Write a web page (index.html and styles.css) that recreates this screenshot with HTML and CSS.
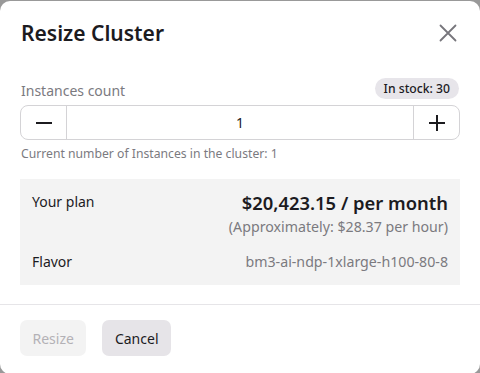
FILE: index.html
```html
<!DOCTYPE html>
<html>
<head>
<meta charset="utf-8">
<link rel="stylesheet" href="styles.css">
</head>
<body>
<div class="dialog">
  <div class="header">
    <h1 class="title">Resize Cluster</h1>
    <button class="close" aria-label="Close">
      <svg width="18" height="18" viewBox="0 0 18 18"><path d="M1.5 1.5L16.5 16.5M16.5 1.5L1.5 16.5" stroke="#77767c" stroke-width="1.8" stroke-linecap="round"/></svg>
    </button>
  </div>
  <div class="body">
    <div class="label-row">
      <span class="label">Instances count</span>
      <span class="badge">In stock: 30</span>
    </div>
    <div class="stepper">
      <button class="step"><svg width="16" height="16" viewBox="0 0 16 16"><path d="M0 8H16" stroke="#1c1b1f" stroke-width="2"/></svg></button>
      <div class="value">1</div>
      <button class="step"><svg width="16" height="16" viewBox="0 0 16 16"><path d="M0 8H16M8 0V16" stroke="#1c1b1f" stroke-width="2"/></svg></button>
    </div>
    <div class="hint">Current number of Instances in the cluster: 1</div>
    <div class="plan">
      <div class="plan-row">
        <span class="plan-key">Your plan</span>
        <div class="plan-vals">
          <span class="price">$20,423.15 / per month</span>
          <span class="approx">(Approximately: $28.37 per hour)</span>
        </div>
      </div>
      <div class="plan-row flavor">
        <span class="plan-key">Flavor</span>
        <span class="approx">bm3-ai-ndp-1xlarge-h100-80-8</span>
      </div>
    </div>
  </div>
  <div class="footer">
    <button class="btn btn-disabled">Resize</button>
    <button class="btn btn-secondary">Cancel</button>
  </div>
</div>
</body>
</html>
```

FILE: styles.css
```css
html, body {
  margin: 0;
  padding: 0;
  height: 100%;
}
body {
  background: #999999;
  font-family: "Noto Sans", "Open Sans", sans-serif;
  color: #1c1b1f;
  padding-top: 1px;
  box-sizing: border-box;
  overflow: hidden;
}
.dialog {
  background: #ffffff;
  border-radius: 10px;
  height: 373px;
  width: 480px;
  box-sizing: border-box;
}
.header {
  display: flex;
  justify-content: space-between;
  align-items: center;
  padding: 17px 23px 0 21px;
  height: 30px;
}
.title {
  margin: 0;
  font-size: 21px;
  font-weight: 600;
  line-height: 30px;
}
.close {
  border: none;
  background: none;
  padding: 0;
  width: 18px;
  height: 18px;
  display: flex;
}
.body {
  padding: 29px 20px 0 20px;
}
.label-row {
  display: flex;
  justify-content: space-between;
  align-items: center;
  height: 22px;
  margin-bottom: 6px;
}
.label {
  font-size: 14px;
  color: #7b7a7f;
  padding-left: 1px;
  padding-top: 5px;
}
.badge {
  background: #e7e5ea;
  border-radius: 11px;
  font-size: 12.2px;
  font-weight: 500;
  line-height: 21px;
  padding: 0 9px;
  margin-right: 1px;
}
.stepper {
  display: flex;
  height: 35px;
  border: 1px solid #d4d3d6;
  border-radius: 8px;
  box-sizing: border-box;
}
.step {
  width: 45px;
  border: none;
  background: none;
  display: flex;
  align-items: center;
  justify-content: center;
  padding: 0;
}
.value {
  flex: 1;
  border-left: 1px solid #d4d3d6;
  border-right: 1px solid #d4d3d6;
  display: flex;
  align-items: center;
  justify-content: center;
  font-size: 14px;
}
.hint {
  font-size: 12.2px;
  color: #7b7a7f;
  margin-top: 5px;
  padding-left: 1px;
  line-height: 17px;
}
.plan {
  margin-top: 17px;
  background: #f3f3f3;
  padding: 12px 12px 12px 12px;
  height: 106px;
  box-sizing: border-box;
}
.plan-row {
  display: flex;
  justify-content: space-between;
  align-items: flex-start;
}
.plan-key {
  font-size: 14px;
  line-height: 20px;
  padding-top: 1px;
}
.plan-vals {
  display: flex;
  flex-direction: column;
  align-items: flex-end;
}
.price {
  font-size: 18.4px;
  font-weight: 600;
  line-height: 24px;
}
.approx {
  font-size: 14.2px;
  color: #7b7a7f;
  line-height: 20px;
  margin-top: 2px;
}
.flavor {
  margin-top: 14px;
  align-items: center;
}
.flavor .approx {
  margin-top: 0;
}
.footer {
  margin-top: 19px;
  border-top: 1px solid #e6e5e8;
  padding: 15px 20px;
  display: flex;
  gap: 16px;
}
.btn {
  font-family: inherit;
  font-size: 14px;
  border: none;
  border-radius: 7px;
  height: 36px;
  padding: 0 12px;
}
.btn-disabled {
  background: #f3f3f3;
  color: #b3b1b6;
  padding: 0 12.5px;
}
.btn-secondary {
  background: #e6e4e8;
  color: #1c1b1f;
  padding: 0 12.5px;
}
```
